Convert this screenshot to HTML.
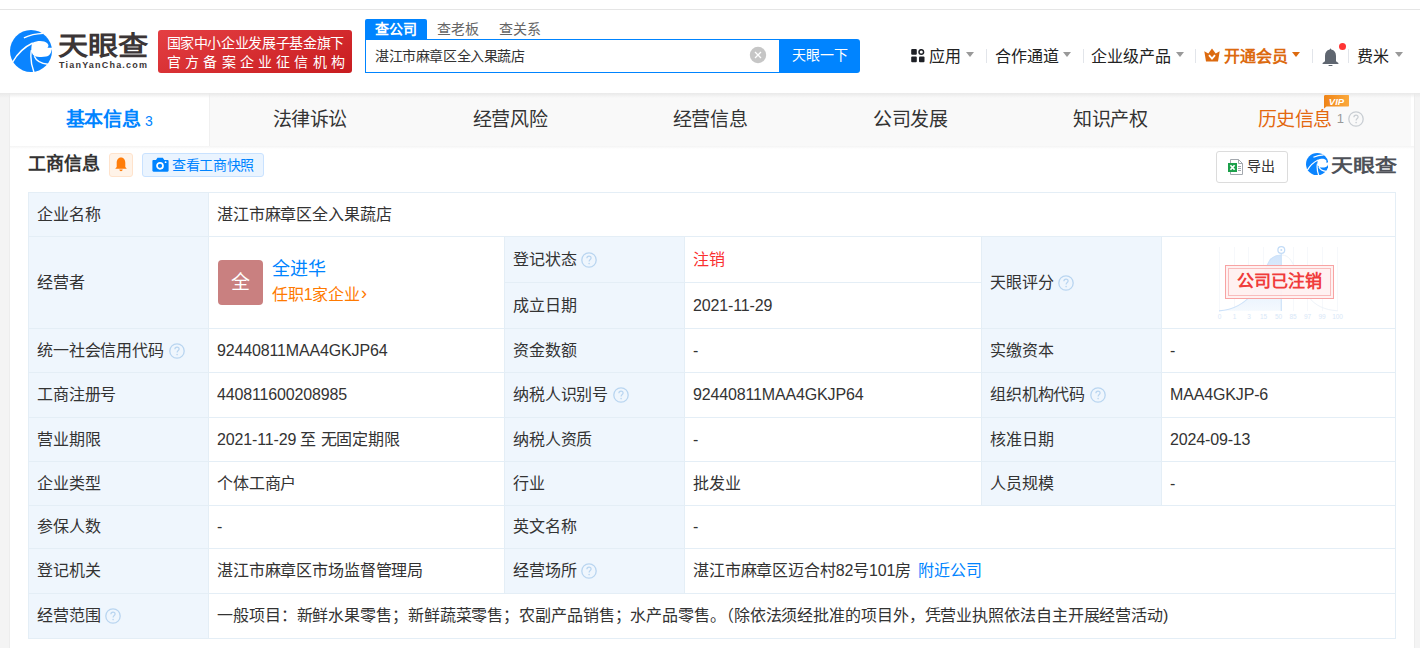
<!DOCTYPE html>
<html lang="zh-CN"><head><meta charset="utf-8">
<style>
*{margin:0;padding:0;box-sizing:border-box;}
html,body{width:1420px;height:648px;overflow:hidden;background:#f4f4f4;font-family:"Liberation Sans",sans-serif;color:#333;}
.abs{position:absolute;}
#top{position:absolute;left:0;top:0;width:1420px;height:93px;background:#fff;}
#topline{position:absolute;left:0;top:9px;width:1420px;height:1px;background:#e5e5e5;}
#shadow{position:absolute;left:0;top:93px;width:1420px;height:5px;background:linear-gradient(#e9e9e9,rgba(240,240,240,0));z-index:5;}
#card{position:absolute;left:10px;top:93px;width:1404px;height:600px;background:#fff;box-shadow:-1px 0 0 #ededed,1px 0 0 #ededed;}
.badge{left:158px;top:30px;width:194px;height:43px;border-radius:3px;background:linear-gradient(160deg,#e43f43,#c81c1f);color:#fff;}
.badge div{position:absolute;left:9px;font-weight:500;font-size:13.5px;line-height:16px;white-space:nowrap;}
.stab{top:19px;height:20px;font-size:14px;line-height:20px;color:#666;}
.nav{top:47px;font-size:16px;line-height:20px;color:#222;white-space:nowrap;}
.caret{width:0;height:0;border-left:4.5px solid transparent;border-right:4.5px solid transparent;border-top:5px solid #999;}
.sep{width:1px;height:14px;background:#e2e5ea;top:49px;}
.tab{position:absolute;top:0;height:53px;width:200.17px;background:#f9f9f9;text-align:center;font-size:19px;letter-spacing:-0.4px;line-height:53px;color:#333;}
table{position:absolute;left:28px;top:192px;border-collapse:collapse;table-layout:fixed;width:1367px;}
td{border:1px solid #e4eef6;font-size:16px;line-height:20px;letter-spacing:-0.15px;color:#333;padding:0 9px 0 8px;height:44px;vertical-align:middle;white-space:nowrap;}
td.l{background:#eff6fd;}
tr.r43 td{height:43px;}
.q{display:inline-block;width:16px;height:16px;margin-left:5px;vertical-align:-3px;}
</style></head><body>
<svg width="0" height="0" style="position:absolute">
  <defs>
    <g id="tyc">
      <circle cx="30.9" cy="50.9" r="21" fill="#0a84ff"/>
      <path d="M32.1 42.9 C35 41.2 37.5 40.8 39.9 40.8 C43 40.8 45.5 41.6 47.2 43.2 C48.6 44.6 48.8 46 47.4 47.6 L53 47.8 L53 49.3 L51.6 49.3 C51.2 52.8 49.6 55.6 46 56.5 C42.5 57.3 37 57 34.3 56 C32 54.3 31.1 51.6 31.2 49.4 C31.3 46.6 31.6 44.4 32.1 42.9 Z" fill="#fff"/>
      <path d="M23.8 37.8 C29 35.3 36 33.6 43.2 33.3" stroke="#fff" fill="none"/>
      <path d="M12.5 62 C17 54 24 47 32.6 42.9" stroke="#fff" fill="none"/>
      <path d="M31.3 50 C30.2 56 30.8 64 34 72.5" stroke="#fff" fill="none"/>
      <path d="M34.2 56.2 C36 60.5 41 63.6 47.8 64.2" stroke="#fff" fill="none"/>
    </g>
    <g id="qm">
      <circle cx="8" cy="8" r="7.2" fill="none" stroke-width="1.3"/>
      <path d="M5.9 6.3 C5.9 4.9 6.9 4.1 8 4.1 C9.2 4.1 10.1 4.9 10.1 6 C10.1 7.4 8.1 7.6 8.1 9.4" fill="none" stroke-width="1.2"/>
      <circle cx="8.1" cy="11.6" r="0.8" stroke="none"/>
    </g>
  </defs>
</svg>
<div id="top"></div>
<div id="topline"></div>
<div id="card">
  <div class="tab" style="left:-0.5px;width:200.2px;background:#fff;border-right:1px solid #f0f0f0;"><b style="color:#0084ff">基本信息</b> <span style="font-size:14px;color:#0084ff">3</span></div>
  <div class="tab" style="left:199.67px">法律诉讼</div>
  <div class="tab" style="left:399.84px">经营风险</div>
  <div class="tab" style="left:600.01px">经营信息</div>
  <div class="tab" style="left:800.18px">公司发展</div>
  <div class="tab" style="left:1000.35px">知识产权</div>
  <div class="tab" style="left:1200.52px;color:#e3680f">历史信息 <span style="font-size:13px;color:#999;position:relative;top:-3px">1</span><svg class="q" style="stroke:#c9ced3;fill:#c9ced3;margin-left:4px;vertical-align:-1px" viewBox="0 0 16 16"><use href="#qm"/></svg></div>
</div>
<div id="shadow"></div>
<div class="abs" style="left:10px;top:146px;width:1404px;height:3px;background:linear-gradient(#f4f4f4,rgba(255,255,255,0));"></div>

<!-- header -->
<svg class="abs" style="left:10px;top:30px;stroke-width:1.4" width="42" height="42" viewBox="9.9 29.9 42 42"><use href="#tyc"/></svg>
<div class="abs badge">
  <div style="top:5px;font-size:14px;left:8.5px;letter-spacing:-0.35px">国家中小企业发展子基金旗下</div>
  <div style="top:24px;letter-spacing:4.2px;font-size:14px;">官方备案企业征信机构</div>
</div>
<div class="abs" style="left:58px;top:31px;font-size:26px;font-weight:bold;color:#3b3536;line-height:30px;transform:scaleX(1.16);transform-origin:0 0;">天眼查</div>
<div class="abs" style="left:59px;top:60px;font-size:9px;font-weight:bold;color:#3b3536;letter-spacing:1.2px;line-height:10px;">TianYanCha.com</div>

<div class="abs stab" style="left:365px;width:62px;background:#0084ff;color:#fff;text-align:center;border-radius:2px 2px 0 0;font-weight:bold;">查公司</div>
<div class="abs stab" style="left:437px;">查老板</div>
<div class="abs stab" style="left:499px;">查关系</div>
<div class="abs" style="left:365px;top:39px;width:415px;height:34px;border:1px solid #0084ff;background:#fff;"></div>
<div class="abs" style="left:375px;top:46px;font-size:14px;letter-spacing:-0.4px;line-height:20px;color:#333;">湛江市麻章区全入果蔬店</div>
<svg class="abs" style="left:749px;top:46px" width="18" height="18" viewBox="0 0 18 18"><circle cx="9" cy="9" r="8.2" fill="#c6c6c6"/><path d="M6 6 L12 12 M12 6 L6 12" stroke="#fff" stroke-width="1.3"/></svg>
<div class="abs" style="left:779px;top:39px;width:81px;height:34px;background:#0084ff;color:#fff;font-size:14px;line-height:32px;text-align:center;border-radius:0 3px 3px 0;font-weight:500;">天眼一下</div>

<!-- nav -->
<svg class="abs" style="left:911px;top:49px" width="14" height="14" viewBox="0 0 14 14"><rect x="0.2" y="0" width="5.6" height="5.8" rx="1" fill="#1e2026"/><circle cx="10.3" cy="3" r="2.3" fill="none" stroke="#1e2026" stroke-width="1.5"/><rect x="0.2" y="7.6" width="5.6" height="5.6" rx="1" fill="#1e2026"/><rect x="8" y="7.6" width="5.5" height="5.6" rx="1" fill="#1e2026"/></svg>
<div class="abs nav" style="left:929px;">应用</div>
<div class="abs nav" style="left:995px;">合作通道</div>
<div class="abs nav" style="left:1091px;">企业级产品</div>
<svg class="abs" style="left:1204px;top:48px" width="16" height="14" viewBox="0 0 16 14"><path d="M0.3 3.2 L4.3 5.6 L8 0.4 L11.7 5.6 L15.7 3.2 L14 13.6 L2 13.6 Z" fill="#dc6a0f"/><path d="M5 7.2 L8 10.6 L11 7.2" stroke="#fff" stroke-width="1.8" fill="none"/></svg>
<div class="abs nav" style="left:1224px;color:#dc6a0f;font-weight:bold;">开通会员</div>
<svg class="abs" style="left:1322px;top:48px" width="17" height="18" viewBox="0 0 17 18"><path d="M8.5 0.3 L9.3 1.6 C12.4 2.2 14 4.6 14 8 L14 13.2 L16.4 15 L16.4 16 L0.6 16 L0.6 15 L3 13.2 L3 8 C3 4.6 4.6 2.2 7.7 1.6 Z" fill="#5f6670"/><rect x="6.6" y="17" width="3.8" height="1" fill="#5f6670"/></svg>
<div class="abs" style="left:1339px;top:43px;width:7px;height:7px;border-radius:50%;background:#ff3434;"></div>
<div class="abs nav" style="left:1357px;">费米</div>
<div class="abs caret" style="left:966px;top:52px;"></div>
<div class="abs caret" style="left:1063px;top:52px;"></div>
<div class="abs caret" style="left:1176px;top:52px;"></div>
<div class="abs caret" style="left:1292px;top:52px;border-top-color:#dc6a0f;"></div>
<div class="abs caret" style="left:1395px;top:52px;"></div>
<div class="abs sep" style="left:986px;"></div>
<div class="abs sep" style="left:1083px;"></div>
<div class="abs sep" style="left:1195px;"></div>
<div class="abs sep" style="left:1312px;"></div>
<div class="abs sep" style="left:1348px;"></div>

<!-- section header -->
<div class="abs" style="left:28px;top:152px;font-size:18px;font-weight:bold;line-height:24px;color:#333;">工商信息</div>
<div class="abs" style="left:109px;top:153px;width:24px;height:24px;background:#fff3e8;border:1px solid #ffe3cc;border-radius:3px;"></div>
<svg class="abs" style="left:115px;top:157px" width="12" height="15" viewBox="0 0 12 15"><path d="M6 0.5 C9 0.5 10.3 3 10.3 6 L10.3 10 L11.8 11.8 L0.2 11.8 L1.7 10 L1.7 6 C1.7 3 3 0.5 6 0.5 Z" fill="#ff7d0a"/><path d="M4.3 12.6 L7.7 12.6 C7.5 13.8 6.8 14.3 6 14.3 C5.2 14.3 4.5 13.8 4.3 12.6 Z" fill="#ff7d0a"/></svg>
<div class="abs" style="left:142px;top:153px;width:122px;height:24px;background:#eaf4ff;border:1px solid #c9e2ff;border-radius:3px;"></div>
<svg class="abs" style="left:152px;top:157px" width="17" height="15" viewBox="0 0 17 15"><path d="M1.5 3 L4 3 L5.5 0.8 L10.8 0.8 L12.3 3 L15.5 3 C16.2 3 16.6 3.4 16.6 4.1 L16.6 13.6 C16.6 14.3 16.2 14.7 15.5 14.7 L1.5 14.7 C0.8 14.7 0.4 14.3 0.4 13.6 L0.4 4.1 C0.4 3.4 0.8 3 1.5 3 Z" fill="#0084ff"/><circle cx="8" cy="8.8" r="3" fill="none" stroke="#fff" stroke-width="1.7"/><circle cx="13.6" cy="5.2" r="0.9" fill="#fff"/></svg>
<div class="abs" style="left:172px;top:154px;font-size:14px;letter-spacing:-0.35px;line-height:22px;color:#0084ff;">查看工商快照</div>

<div class="abs" style="left:1216px;top:151px;width:72px;height:32px;border:1px solid #dcdcdc;border-radius:3px;background:#fff;"></div>
<svg class="abs" style="left:1228px;top:159px" width="16" height="17" viewBox="0 0 16 17"><path d="M2.5 0.5 L10.5 0.5 L14.5 4.5 L14.5 15.5 L2.5 15.5 Z" fill="#fff" stroke="#a3a8ae" stroke-width="1"/><path d="M10.5 0.5 L10.5 4.5 L14.5 4.5" fill="none" stroke="#a3a8ae" stroke-width="1"/><rect x="10" y="7" width="3" height="1" fill="#a3a8ae"/><rect x="10" y="9" width="3" height="1" fill="#a3a8ae"/><rect x="10" y="11" width="3" height="1" fill="#a3a8ae"/><rect x="0" y="4" width="9" height="9" fill="#1ba04a"/><path d="M2.4 6.2 L6.6 10.8 M6.6 6.2 L2.4 10.8" stroke="#fff" stroke-width="1.7"/></svg>
<div class="abs" style="left:1247px;top:156px;font-size:14px;line-height:20px;color:#333;">导出</div>
<svg class="abs" style="left:1306px;top:153px;stroke-width:2.3" width="22.4" height="22.4" viewBox="9.9 29.9 42 42"><use href="#tyc"/></svg>
<div class="abs" style="left:1330.5px;top:152px;font-size:18px;font-weight:bold;line-height:28px;color:#4e5158;transform:scaleX(1.22);transform-origin:0 0;">天眼查</div>

<table>
<colgroup><col style="width:180px"><col style="width:296px"><col style="width:180px"><col style="width:297px"><col style="width:180px"><col style="width:234px"></colgroup>
<tr><td class="l">企业名称</td><td colspan="5">湛江市麻章区全入果蔬店</td></tr>
<tr><td class="l" rowspan="2">经营者</td><td rowspan="2" style="position:relative">
  <div class="abs" style="left:9px;top:23px;width:45px;height:45px;border-radius:4px;background:#c98080;color:#fff;font-size:19px;line-height:45px;text-align:center;">全</div>
  <div class="abs" style="left:63px;top:20px;font-size:18px;line-height:24px;color:#0084ff;">全进华</div>
  <div class="abs" style="left:63px;top:47px;font-size:16px;line-height:20px;color:#ff7a00;">任职1家企业<span style="font-size:18px;margin-left:1px;position:relative;top:-1px">›</span></div>
</td><td class="l" style="height:46px">登记状态<svg class="q" style="stroke:#b9d5f0;fill:#b9d5f0" viewBox="0 0 16 16"><use href="#qm"/></svg></td><td style="color:#fa3030">注销</td><td class="l" rowspan="2">天眼评分<svg class="q" style="stroke:#b9d5f0;fill:#b9d5f0" viewBox="0 0 16 16"><use href="#qm"/></svg></td><td rowspan="2" style="position:relative">
  <svg class="abs" style="left:50px;top:3px" width="140" height="85" viewBox="1212 240 140 85">
    <defs><linearGradient id="gf" x1="0" y1="0" x2="0" y2="1"><stop offset="0" stop-color="#d2e5fb"/><stop offset="1" stop-color="#f4f9fe"/></linearGradient></defs>
    <g stroke="#f6f8fb" stroke-width="1"><path d="M1219.5 247 V311 M1234.5 247 V311 M1248.5 247 V311 M1263.5 247 V311 M1293.5 247 V311 M1307.5 247 V311 M1322.5 247 V311 M1337.5 247 V311"/></g>
    <path d="M1219 310.8 C1236 310 1246 302 1254 292 C1262 280 1266 266 1270 260 C1274 255.5 1277 255 1281.3 255 L1281.3 310.8 Z" fill="url(#gf)"/>
    <path d="M1219 310.8 C1236 310 1246 302 1254 292 C1262 280 1266 266 1270 260 C1274 255.5 1277 255 1281.3 255" fill="none" stroke="#cde2f9" stroke-width="1.2"/>
    <path d="M1281.3 255 C1286 255 1289 257 1292 262 C1297 270 1301 284 1308 296 C1315 306 1325 310 1337.7 310.8" fill="none" stroke="#eef3f9" stroke-width="1"/>
    <path d="M1281.3 253 V311" stroke="#cde2f9" stroke-width="1.2"/>
    <circle cx="1281.3" cy="250" r="3.4" fill="#fff" stroke="#c3dcf7" stroke-width="1.3"/><circle cx="1281.3" cy="250" r="1" fill="#c3dcf7"/>
    <g fill="#d8e7f7" font-size="6.5" font-family="Liberation Sans" text-anchor="middle"><text x="1219.5" y="319">0</text><text x="1234.5" y="319">1</text><text x="1249" y="319">3</text><text x="1263.5" y="319">15</text><text x="1278.5" y="319">50</text><text x="1293" y="319">85</text><text x="1307.5" y="319">97</text><text x="1322" y="319">99</text><text x="1337.5" y="319">100</text></g>
  </svg>
  <div class="abs" style="left:63px;top:28px;width:109px;height:34px;border:1px solid #f8a3a3;background:rgba(255,240,240,0.92);"></div>
  <div class="abs" style="left:66px;top:31px;width:103px;height:28px;border:1px solid #f9bcbc;"></div>
  <div class="abs" style="left:63px;top:28px;width:109px;height:34px;font-size:17px;line-height:34px;text-align:center;color:#f03b3b;font-weight:bold;">公司已注销</div>
</td></tr>
<tr><td class="l" style="height:46px">成立日期</td><td>2021-11-29</td></tr>
<tr><td class="l">统一社会信用代码<svg class="q" style="stroke:#b9d5f0;fill:#b9d5f0" viewBox="0 0 16 16"><use href="#qm"/></svg></td><td>92440811MAA4GKJP64</td><td class="l">资金数额</td><td>-</td><td class="l">实缴资本</td><td>-</td></tr>
<tr><td class="l" style="height:45px">工商注册号</td><td>440811600208985</td><td class="l">纳税人识别号<svg class="q" style="stroke:#b9d5f0;fill:#b9d5f0" viewBox="0 0 16 16"><use href="#qm"/></svg></td><td>92440811MAA4GKJP64</td><td class="l">组织机构代码<svg class="q" style="stroke:#b9d5f0;fill:#b9d5f0" viewBox="0 0 16 16"><use href="#qm"/></svg></td><td>MAA4GKJP-6</td></tr>
<tr><td class="l">营业期限</td><td>2021-11-29 至 无固定期限</td><td class="l">纳税人资质</td><td>-</td><td class="l">核准日期</td><td>2024-09-13</td></tr>
<tr><td class="l">企业类型</td><td>个体工商户</td><td class="l">行业</td><td>批发业</td><td class="l">人员规模</td><td>-</td></tr>
<tr class="r43"><td class="l">参保人数</td><td>-</td><td class="l">英文名称</td><td colspan="3">-</td></tr>
<tr><td class="l" style="height:45px">登记机关</td><td>湛江市麻章区市场监督管理局</td><td class="l">经营场所<svg class="q" style="stroke:#b9d5f0;fill:#b9d5f0" viewBox="0 0 16 16"><use href="#qm"/></svg></td><td colspan="3">湛江市麻章区迈合村82号101房 <span style="color:#0084ff;margin-left:3px">附近公司</span></td></tr>
<tr><td class="l" style="height:45px">经营范围<svg class="q" style="stroke:#b9d5f0;fill:#b9d5f0" viewBox="0 0 16 16"><use href="#qm"/></svg></td><td colspan="5" style="letter-spacing:-0.1px">一般项目：新鲜水果零售；新鲜蔬菜零售；农副产品销售；水产品零售。（除依法须经批准的项目外，凭营业执照依法自主开展经营活动)</td></tr>
</table>
<!-- VIP badge -->
<svg class="abs" style="left:1323px;top:94px;z-index:6" width="27" height="15" viewBox="0 0 27 15"><defs><linearGradient id="vg" x1="0" x2="1"><stop offset="0" stop-color="#ef8417"/><stop offset="1" stop-color="#fba93d"/></linearGradient></defs><path d="M2.5 1 L25 1 C25.8 1 26 1.3 26 2 L26 11.6 C26 12.3 25.8 12.6 25 12.6 L3.5 12.6 L1 14.6 L1 2.5 C1 1.5 1.5 1 2.5 1 Z" fill="url(#vg)"/><text x="13.5" y="10.5" text-anchor="middle" font-size="9.5" font-weight="bold" font-style="italic" fill="#fff" font-family="Liberation Sans">VIP</text></svg>
</body></html>
